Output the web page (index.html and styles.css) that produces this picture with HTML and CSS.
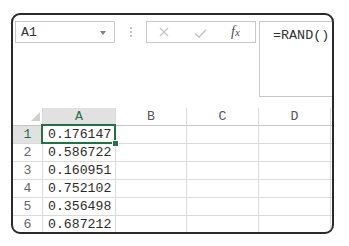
FILE: index.html
```html
<!DOCTYPE html>
<html lang="en">
<head>
    <meta charset="UTF-8">
    <title>RAND</title>
    <link rel="stylesheet" href="styles.css">
</head>
<body>
    <div class="frame">
        <div class="toolbar">
            <div class="namebox">
                <span>A1</span>
                <span class="arrow"></span>
            </div>
            <div class="sep"><i></i><i></i><i></i></div>
            <div class="fxbox">
                <svg class="cancel" width="10" height="10" viewBox="0 0 10 10">
                    <path d="M1 1 L9 9 M9 1 L1 9" stroke="#c4c4c4" stroke-width="1.3" fill="none"/>
                </svg>
                <svg class="enter" width="13" height="9" viewBox="0 0 13 9">
                    <path d="M1 4.5 L5 8 L12 1" stroke="#c4c4c4" stroke-width="1.6" fill="none"/>
                </svg>
                <span class="fx">f<small>x</small></span>
            </div>
            <div class="formula">=RAND()</div>
        </div>

        <div class="sheet">
            <div class="cell corner">
                <svg width="9" height="9" viewBox="0 0 9 9"><polygon points="9,0 9,9 0,9" fill="#cfcfcf"/></svg>
            </div>
            <div class="cell colhead active">A</div>
            <div class="cell colhead">B</div>
            <div class="cell colhead">C</div>
            <div class="cell colhead">D</div>
            <div class="cell colhead"></div>

            <div class="cell rowhead active">1</div>
            <div class="cell selected">0.176147<span class="handle"></span></div>
            <div class="cell"></div><div class="cell"></div><div class="cell"></div><div class="cell"></div>

            <div class="cell rowhead">2</div>
            <div class="cell">0.586722</div>
            <div class="cell"></div><div class="cell"></div><div class="cell"></div><div class="cell"></div>

            <div class="cell rowhead">3</div>
            <div class="cell">0.160951</div>
            <div class="cell"></div><div class="cell"></div><div class="cell"></div><div class="cell"></div>

            <div class="cell rowhead">4</div>
            <div class="cell">0.752102</div>
            <div class="cell"></div><div class="cell"></div><div class="cell"></div><div class="cell"></div>

            <div class="cell rowhead">5</div>
            <div class="cell">0.356498</div>
            <div class="cell"></div><div class="cell"></div><div class="cell"></div><div class="cell"></div>

            <div class="cell rowhead">6</div>
            <div class="cell">0.687212</div>
            <div class="cell"></div><div class="cell"></div><div class="cell"></div><div class="cell"></div>
        </div>
    </div>
</body>
</html>
```

FILE: styles.css
```css
body {
    margin: 0;
    background: #fff;
    font-family: "Liberation Mono", "DejaVu Sans Mono", monospace;
    color: #2b2b2b;
}
.frame {
    box-sizing: border-box;
    width: 323px;
    height: 221px;
    margin: 13px 0 0 11px;
    border: 2px solid #2a2a2a;
    border-radius: 9px;
    overflow: hidden;
    background: #fff;
}
.toolbar {
    display: flex;
    align-items: flex-start;
    padding: 6px 0 0 2px;
}
.toolbar > * {
    flex: none;
}
.namebox {
    box-sizing: border-box;
    width: 100px;
    height: 22px;
    border: 1px solid #c8c8c8;
    display: flex;
    align-items: center;
    justify-content: space-between;
    padding: 1px 8px 0 5px;
    font-size: 13.2px;
    color: #333;
}
.arrow {
    width: 0;
    height: 0;
    border-left: 3px solid transparent;
    border-right: 3px solid transparent;
    border-top: 4px solid #808080;
}
.sep {
    width: 31px;
    height: 22px;
    display: flex;
    flex-direction: column;
    align-items: center;
    justify-content: center;
    gap: 2px;
}
.sep i {
    width: 2px;
    height: 2px;
    background: #c4c4c4;
}
.fxbox {
    box-sizing: border-box;
    width: 110px;
    height: 22px;
    border: 1px solid #c8c8c8;
    display: flex;
    align-items: center;
}
.cancel {
    margin-left: 12px;
}
.enter {
    margin-left: 25px;
    margin-top: 2px;
}
.fx {
    margin-left: 24px;
    font-family: "Liberation Serif", serif;
    font-style: italic;
    font-size: 14px;
    color: #4a4a4a;
}
.fx small {
    font-size: 11px;
}
.formula {
    box-sizing: border-box;
    width: 100px;
    height: 76px;
    margin-left: 3px;
    border: 1px solid #c8c8c8;
    padding: 6px 13px;
    font-size: 13.4px;
    color: #333;
}
.sheet {
    margin-top: 11px;
    display: grid;
    grid-template-columns: 30px 73px 71px 72px 72px 20px;
    grid-auto-rows: 18px;
}
.cell {
    box-sizing: border-box;
    border-right: 1px solid #dadada;
    border-bottom: 1px solid #dadada;
    font-size: 13.2px;
    line-height: 18px;
    padding-left: 5px;
    white-space: nowrap;
}
.corner {
    display: flex;
    justify-content: flex-end;
    align-items: flex-end;
    padding: 0 2px 4px 0;
    border-bottom-color: #c6c6c6;
}
.colhead {
    text-align: center;
    padding-left: 0;
    color: #555;
    border-bottom-color: #c6c6c6;
}
.rowhead {
    text-align: center;
    padding-left: 0;
    color: #666;
}
.active {
    background: #e1e1e1;
    color: #217346;
}
.selected {
    position: relative;
}
.selected::after {
    content: "";
    position: absolute;
    top: -2px;
    left: -2px;
    right: -1px;
    bottom: -1px;
    border: 2px solid #217346;
}
.handle {
    position: absolute;
    right: -4px;
    bottom: -4px;
    width: 5px;
    height: 5px;
    background: #217346;
    border: 1px solid #fff;
    z-index: 2;
}
```
